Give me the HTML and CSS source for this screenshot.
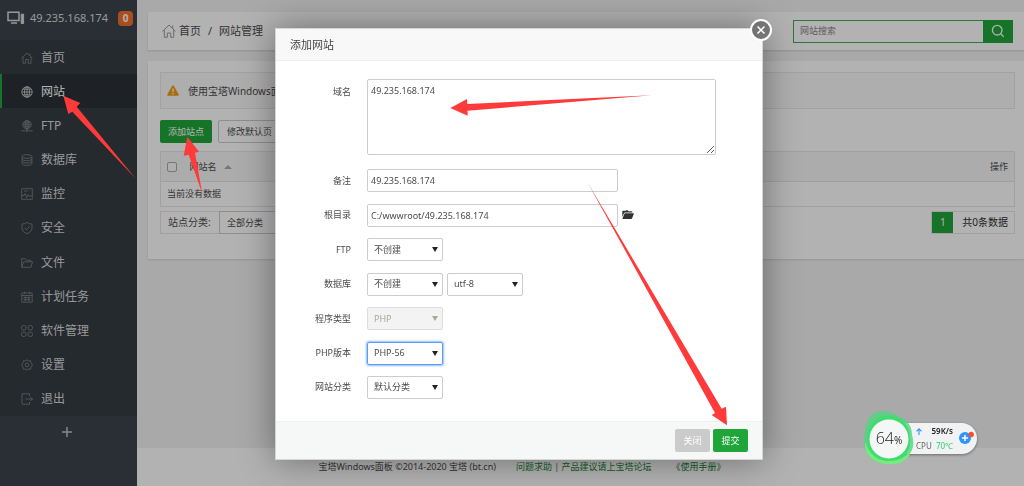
FILE: index.html
```html
<!DOCTYPE html>
<html lang="en">
<head>
<meta charset="utf-8">
<title>网站管理</title>
<link rel="stylesheet" href="styles.css">
</head>
<body>
<div class="app">
  <aside class="sidebar">
    <div class="host">
      <svg class="host-icon" width="18" height="14" viewBox="0 0 18 14" fill="none" stroke="currentColor" stroke-width="1.5"><path d="M1 1.2h11v8.3H1zM4 12h6"/><path d="M14.2 3.2h2.4v9.3h-2.4z" fill="currentColor" stroke-width="1"/></svg>
      <span class="host-ip">49.235.168.174</span>
      <span class="badge">0</span>
    </div>
    <ul class="menu">
      <li><a href="#"><svg viewBox="0 0 12 12"><path d="M.5 6.2 6 1l5.500 5.200M2 5v6.300h2.700V7.500h2.600v3.800H10V5M9 1.500v2"/></svg>首页</a></li>
      <li class="active"><a href="#"><svg viewBox="0 0 12 12"><circle cx="6" cy="6" r="5.200"/><ellipse cx="6" cy="6" rx="2.500" ry="5.200"/><path d="M.8 6h10.400M6 .8v10.400M1.700 3.200h8.600M1.700 8.800h8.600"/></svg>网站</a></li>
      <li><a href="#"><svg viewBox="0 0 12 12"><circle cx="6" cy="4.700" r="4.200"/><ellipse cx="6" cy="4.700" rx="1.900" ry="4.200"/><path d="M1.800 4.700h8.400M6 .5v10M2.500 2.700h7M2.500 6.700h7M.3 10.800h3.800M7.900 10.800h3.800"/><circle cx="6" cy="10.800" r="1"/></svg>FTP</a></li>
      <li><a href="#"><svg viewBox="0 0 12 12"><ellipse cx="6" cy="2.500" rx="4.900" ry="1.900"/><path d="M1.100 2.500v7c0 2.500 9.800 2.500 9.800 0v-7M1.100 5c0 2.300 9.800 2.300 9.800 0M1.100 7.300c0 2.300 9.800 2.300 9.800 0"/></svg>数据库</a></li>
      <li><a href="#"><svg viewBox="0 0 12 12"><path d="M.7.7h10.600v10.600H.7zM1 7.500h2l1.200-2 1.500 4 1.600-3 1 1.500H11M3 3h3.500M8.500 3H9"/></svg>监控</a></li>
      <li><a href="#"><svg viewBox="0 0 12 12"><path d="M6 .5c1.500 1 3 1.500 5 1.500v4c0 2.700-2 4.600-5 5.600C3 10.600 1 8.700 1 6V2C3 2 4.500 1.500 6 .5zM3.500 5.800l2 2 3.200-3.500"/></svg>安全</a></li>
      <li><a href="#"><svg viewBox="0 0 12 12"><path d="M.7 10.300V1.700h3.500l1.200 1.500h4.400v1.600M.7 10.300l2-5.500h8.800l-1.600 5.500z"/></svg>文件</a></li>
      <li><a href="#"><svg viewBox="0 0 12 12"><path d="M.8 2h10.400v9.200H.8zM.8 4.500h10.400M3.500.7v2M8.500.7v2M2.500 6.500h7M2.500 8.700h7M4.200 5.500v5M7.800 5.500v5"/></svg>计划任务</a></li>
      <li><a href="#"><svg viewBox="0 0 12 12"><rect x=".6" y=".6" width="4.300" height="4.300" rx="1.300"/><rect x="7.100" y=".6" width="4.300" height="4.300" rx="1.300"/><rect x=".6" y="7.100" width="4.300" height="4.300" rx="1.300"/><rect x="7.100" y="7.100" width="4.300" height="4.300" rx="1.300"/></svg>软件管理</a></li>
      <li><a href="#"><svg viewBox="0 0 12 12"><path d="m6 .6 1.300 1.500 2.200-.4.400 2.100L11.500 6l-1.600 2.200-.4 2.100-2.200-.4L6 11.400 4.700 9.900l-2.200.4-.4-2.100L.5 6l1.600-2.200.4-2.100 2.200.4z"/><circle cx="6" cy="6" r="1.800"/></svg>设置</a></li>
      <li><a href="#"><svg viewBox="0 0 12 12"><path d="M8.500 3V.8H1v10.400h7.500V9M4.500 6h7M9.500 4l2 2-2 2"/></svg>退出</a></li>
    </ul>
    <button class="menu-add" type="button" aria-label="添加"><svg width="12" height="12" viewBox="0 0 12 12"><path d="M6 1v10M1 6h10" stroke="currentColor" stroke-width="1.500"/></svg></button>
  </aside>

  <div class="content">
    <header class="topbar">
      <nav class="crumbs">
        <svg width="14" height="14" viewBox="0 0 14 14" fill="none" stroke="currentColor"><path d="M.5 7.300 7 1l6.500 6.300M2.300 6v7.300h3V9h3.400v4.300h3V6M10.700 1.500v2.800"/></svg>
        <a href="#">首页</a><span class="slash">/</span><span>网站管理</span>
      </nav>
      <form class="search">
        <input type="text" placeholder="网站搜索" aria-label="网站搜索">
        <button type="button" aria-label="搜索"><svg width="14" height="14" viewBox="0 0 14 14" fill="none" stroke="currentColor" stroke-width="1.300"><circle cx="6.200" cy="6.200" r="4.800"/><path d="m9.700 9.700 3 3"/></svg></button>
      </form>
    </header>

    <main class="panel">
      <div class="notice">
        <svg width="12" height="11" viewBox="0 0 12 11"><path d="M6 .3c.4 0 .7.200.9.600l4.800 8.600c.4.700 0 1.300-.8 1.300H1.100c-.8 0-1.200-.6-.8-1.300L5.100.9C5.300.5 5.600.3 6 .3z" fill="#f39c12"/><path d="M6 3.500v3.500M6 8v1.400" stroke="#fff" stroke-width="1.300"/></svg>
        <span>使用宝塔Windows面板</span>
      </div>
      <div class="actions">
        <button class="btn btn-green" type="button">添加站点</button>
        <button class="btn btn-plain" type="button">修改默认页</button>
      </div>
      <table class="sites">
        <thead><tr><th class="col-check"><input type="checkbox" aria-label="全选"></th><th>网站名 <span class="sort"></span></th><th class="col-op">操作</th></tr></thead>
        <tbody><tr><td colspan="3">当前没有数据</td></tr></tbody>
      </table>
      <div class="table-foot">
        <div class="filter">
          <label for="site-type">站点分类:</label>
          <select id="site-type"><option>全部分类</option></select>
        </div>
        <div class="pager"><a class="page" href="#">1</a><span>共0条数据</span></div>
      </div>
    </main>

    <footer class="footer">
      <span>宝塔Windows面板 ©2014-2020 宝塔 (bt.cn)</span>
      <a href="#">问题求助 | 产品建议请上宝塔论坛</a>
      <a href="#">《使用手册》</a>
    </footer>
  </div>
</div>

<div class="shade"></div>

<section class="dialog" role="dialog" aria-labelledby="dialog-title">
  <h2 class="dialog-title" id="dialog-title">添加网站</h2>
  <button class="dialog-close" type="button" aria-label="关闭窗口"><svg width="10" height="10" viewBox="0 0 10 10"><path d="m1.500 1.500 7 7m0-7-7 7" stroke="#fff" stroke-width="1.600"/></svg></button>
  <form class="form">
    <div class="row row-area"><label for="domain">域名</label><textarea id="domain">49.235.168.174</textarea></div>
    <div class="row"><label for="note">备注</label><input class="text" id="note" type="text" value="49.235.168.174"></div>
    <div class="row"><label for="root">根目录</label><input class="text" id="root" type="text" value="C:/wwwroot/49.235.168.174"><svg class="folder" width="12" height="10" viewBox="0 0 12 10"><path d="M.3 7V1.500C.3 1 .6.700 1 .7h2.500l.9-.4h1.300l.8.900h3c.5 0 .8.300.8.800v.6H3.100c-.5 0-.9.200-1.100.7z" fill="#333"/><path d="M3.200 3.300h8.200c.4 0 .5.200.4.600l-1.700 4.400c-.2.500-.5.700-1 .7H.9c-.4 0-.6-.2-.4-.6l1.800-4.500c.2-.4.500-.6.900-.6z" fill="#333"/></svg></div>
    <div class="row"><label for="ftp">FTP</label><span class="pick"><select id="ftp"><option>不创建</option></select></span></div>
    <div class="row"><label for="db">数据库</label><span class="pick"><select id="db"><option>不创建</option></select></span><span class="pick"><select aria-label="编码"><option>utf-8</option></select></span></div>
    <div class="row"><label for="kind">程序类型</label><span class="pick off"><select id="kind" disabled><option>PHP</option></select></span></div>
    <div class="row"><label for="php">PHP版本</label><span class="pick focus"><select id="php"><option>PHP-56</option></select></span></div>
    <div class="row"><label for="cat">网站分类</label><span class="pick"><select id="cat"><option>默认分类</option></select></span></div>
  </form>
  <div class="dialog-foot">
    <button class="btn btn-gray" type="button">关闭</button>
    <button class="btn btn-green" type="button">提交</button>
  </div>
</section>

<div class="monitor">
  <div class="stats">
    <svg width="6" height="7" viewBox="0 0 6 7" fill="none" stroke="#2f94ff" stroke-width="1.100"><path d="M3 7V1M.5 3.300 3 .8l2.500 2.500"/></svg>
    <b>59K/s</b>
    <span class="cpu">CPU</span>
    <span class="temp">70℃</span>
  </div>
  <svg class="plus" width="16" height="16" viewBox="0 0 16 16"><circle cx="7" cy="9" r="6" fill="#2f94ff"/><path d="M7 6v6M4 9h6" stroke="#fff" stroke-width="1.500"/><circle cx="13.200" cy="5.500" r="2.700" fill="#f4522d"/></svg>
  <div class="ball">
    <svg width="50" height="54" viewBox="0 0 50 54"><path d="M1 22C1 9 8 0 19 0c7 0 11 3 17 6 8 3 12 10 12 18 2 6 2 13-2 18-4 8-12 11-20 10C14 53 6 49 3 42c-4-5-4-12-2-20z" fill="#4fd67d" opacity=".8"/><path d="M4 20C7 10 15 5 25 5c11 0 21 9 21 21 2 14-7 25-20 25C12 52 0 39 4 20z" fill="#3fdc70"/><path d="M1 31c4 12 12 19 24 19 10 0 18-4 23-12-3 11-12 16-23 15C11 53 0 45 1 31z" fill="#75ec7d"/><circle cx="25" cy="28" r="19.500" fill="#f5f7f7"/></svg>
    <span class="percent">64<small>%</small></span>
  </div>
</div>

<svg class="marks" width="1024" height="486" viewBox="0 0 1024 486" fill="#ff3a3a">
  <path d="M63.300 95.700 80.300 103l-3.600 3.700L136 179 72.300 111.700l-4 2.300z"/>
  <path d="m187.300 136.700 11.700 15-4 1 7.300 41-13.600-39-5 1z"/>
  <path d="M450.300 108 467 99l.3 5 184.500-8.700-184.300 15.400.2 5z"/>
  <path d="m727 425.300-15.300-10.300 3.300-2L587.700 182.700l134 226 4.300-2z"/>
</svg>
</body>
</html>
```
FILE: styles.css
```css
* { box-sizing: border-box; }

body {
  margin: 0;
  font: 9px/14px "Noto Sans", "Noto Sans CJK SC", sans-serif;
  color: #4c4c4c;
  background: #f3f3f3;
}

a { color: inherit; text-decoration: none; }
button, input, select, textarea { font: inherit; color: inherit; margin: 0; }
button { border: 0; padding: 0; }
svg { flex: none; display: block; }

.app { display: flex; min-height: 100vh; }

/* Sidebar */
.sidebar { width: 137px; flex: none; background: #3d444d; color: #d8dadc; }
.host { display: flex; align-items: center; height: 40px; padding: 0 4px 4px 7px; font-size: 11px; }
.host-ip { margin-left: 5px; flex: 1; white-space: nowrap; }
.badge { width: 15px; height: 15px; border-radius: 4px; background: #f3702a; color: #fff; font-weight: bold; font-size: 10px; line-height: 15px; text-align: center; }
.menu { list-style: none; margin: 0; padding: 0; height: 376px; display: grid; grid-auto-rows: 1fr; background: #363d44; font-size: 12px; }
.menu li { display: flex; border-left: 1px solid #3d3d3f; }
.menu a { display: flex; align-items: center; flex: 1; gap: 8px; padding: 1px 0 0 20px; }
.menu svg { width: 12px; height: 12px; fill: none; stroke: #83878c; stroke-width: 0.8; }
.menu .active { background: #2b3035; border-left: 2px solid #20a53a; color: #fff; }
.menu .active a { padding-left: 19px; }
.menu .active svg { stroke: #d5d6d8; }
.menu-add { display: grid; place-items: center; width: 100%; height: 32px; padding-right: 4px; background: none; color: #c0c3c6; }

/* Page content */
.content { flex: 1; min-width: 0; display: flex; flex-direction: column; padding-top: 12px; }
.topbar { display: flex; justify-content: space-between; align-items: center; height: 38px; margin-left: 11px; padding: 0 11px 0 14px; background: #fff; box-shadow: 0 1px 2px rgba(0, 0, 0, .15); }
.crumbs { display: flex; align-items: center; gap: 3px; font-size: 11px; }
.crumbs svg { color: #999; }
.slash { margin: 0 4px; }
.search { display: flex; width: 220px; height: 23px; }
.search input { flex: 1; min-width: 0; border: 1px solid #3dae55; border-right: 0; padding: 0 6px; background: #fff; }
.search input::placeholder { color: #888; opacity: 1; }
.search button { display: grid; place-items: center; width: 30px; background: #20a53a; color: #fff; }

.panel { margin: 11px 0 0 11px; padding: 11px 9px 25px 12px; background: #fff; box-shadow: 0 1px 2px rgba(0, 0, 0, .12); }
.notice { display: flex; align-items: center; gap: 9px; height: 37px; padding-left: 6px; border: 1px solid #e8e8e8; background: #fafafa; font-size: 10px; }
.actions { display: flex; gap: 6px; margin: 11px 0 8px; }
.btn { height: 23px; border-radius: 2px; padding: 0 8px; white-space: nowrap; }
.btn-green { background: #20a53a; color: #fff; }
.btn-plain { background: #fff; border: 1px solid #ccc; }
.btn-gray { background: #cbcbcb; color: #fff; }

.sites { width: 100%; border: 1px solid #e6e6e6; border-collapse: collapse; }
.sites th, .sites td { padding: 0 6px; text-align: left; font-weight: normal; }
.sites th { height: 30px; background: #f6f6f6; border-bottom: 1px solid #e6e6e6; }
.sites td { height: 25px; }
.sites .col-check { width: 23px; }
.sites input { display: block; width: 10px; height: 10px; appearance: none; border: 1px solid #aaa; border-radius: 2px; background: #fafafa; }
.sites .col-op { text-align: right; }
.sort { display: inline-block; margin-left: 5px; border: 4px solid transparent; border-top: 0; border-bottom-color: #aaa; vertical-align: 1px; }

.table-foot { display: flex; justify-content: space-between; margin-top: 4px; font-size: 10px; line-height: 21px; }
.filter, .pager { display: flex; height: 23px; border: 1px solid #e6e6e6; }
.filter label { width: 59px; padding-left: 7px; }
.filter select { width: 75px; height: 23px; margin: -1px; appearance: none; border: 1px solid #ccc; border-radius: 0; padding: 0 7px; background: #fff; font-size: 9px; }
.pager span { padding: 0 6px 0 9px; color: #333; }
.page { width: 21px; background: #20a53a; color: #fff; text-align: center; }

.footer { display: flex; justify-content: center; gap: 20px; height: 38px; margin-top: auto; padding-right: 117px; background: #fff; line-height: 38px; white-space: nowrap; }
.footer a { color: #20853a; }

.shade { position: fixed; inset: 0; background: rgba(0, 0, 0, .3); }

/* Dialog */
.dialog { position: absolute; left: 275px; top: 28px; width: 488px; background: #fff; border: 1px solid #d5d5d5; box-shadow: 0 0 34px rgba(0, 0, 0, .4); }
.dialog-title { margin: 0; height: 32px; padding-left: 14px; border-bottom: 1px solid #eee; background: #f8f8f8; color: #444; font-size: 11px; font-weight: normal; line-height: 31px; }
.dialog-close { position: absolute; right: -10px; top: -10px; display: grid; place-items: center; width: 22px; height: 22px; border: 2px solid #fff; border-radius: 50%; background: #747474; }
.form { display: flex; flex-direction: column; justify-content: space-between; min-height: 360px; padding: 18px 0 22px; }
.row { display: flex; align-items: center; gap: 4px; min-height: 23px; }
.row label { width: 75px; margin-right: 12px; text-align: right; }
.row-area { align-items: flex-start; padding-bottom: 3px; }
.row-area label { line-height: 26px; }
.row textarea { display: block; width: 349px; height: 76px; padding: 4px 3px; border: 1px solid #ccc; border-radius: 2px; background: #fff; }
.text { width: 251px; height: 23px; padding: 0 3px; border: 1px solid #ccc; border-radius: 2px; background: #fff; }
.pick { position: relative; width: 76px; height: 23px; border: 1px solid #ccc; border-radius: 2px; }
.pick select { display: block; width: 100%; height: 100%; appearance: none; border: 0; padding: 0 6px; background: none; outline: 0; }
.pick::after { content: ""; position: absolute; right: 4px; top: 8px; border: 3px solid transparent; border-top: 5px solid #222; border-bottom: 0; pointer-events: none; }
.pick.off { background: #f3f3f3; border-color: #ddd; }
.pick.off select { color: #aaa899; opacity: 1; }
.pick.off::after { border-top-color: #aaa899; }
.pick.focus { border-color: #5a9df8; box-shadow: 0 0 2px 1px #8fbdfb; }
.dialog-foot { display: flex; justify-content: flex-end; gap: 3px; padding: 7px 14px; border-top: 1px solid #edf1f2; background: #f6f8f8; }
.dialog-foot .btn { width: 35px; }

/* Floating system monitor */
.monitor { position: absolute; left: 864px; top: 411px; width: 113px; height: 54px; }
.stats { position: absolute; left: 26px; top: 12px; width: 87px; height: 31px; display: grid; grid-template-columns: 17px 20px; align-items: center; padding: 1px 0 1px 26px; border-radius: 16px; background: #f1f2f3; box-shadow: 0 1px 3px rgba(0, 0, 0, .4); font-size: 8px; white-space: nowrap; }
.stats b, .temp { justify-self: end; }
.stats b { color: #222; font-weight: 600; }
.cpu { color: #666; }
.temp { color: #2fd468; }
.plus { position: absolute; right: 3px; top: 18px; }
.ball { position: absolute; left: 0; top: 0; }
.percent { position: absolute; left: 0; top: 15px; width: 50px; text-align: center; color: #222; font: 300 16px/24px "Open Sans", sans-serif; }
.percent small { font-size: 10px; font-weight: 400; }

.marks { position: absolute; left: 0; top: 0; pointer-events: none; }
```
